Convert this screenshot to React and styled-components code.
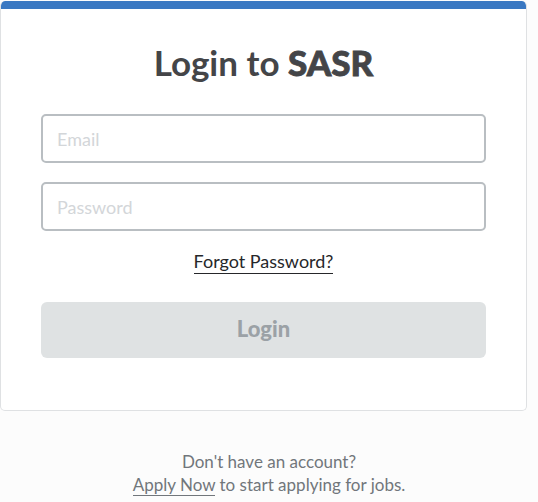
import React from 'react';
import styled, { createGlobalStyle } from 'styled-components';

const GlobalStyle = createGlobalStyle`
  html, body {
    margin: 0;
    padding: 0;
    background: #fcfcfc;
  }
  body {
    font-family: Lato, "Noto Sans", sans-serif;
  }
`;

const Page = styled.div`
  width: 538px;
  min-height: 502px;
`;

// Card with a blue strip across the top
const Card = styled.div`
  box-sizing: border-box;
  width: 527px;
  margin-top: 1px;
  background: #ffffff;
  border: 1px solid #dfe1e3;
  border-top: none;
  border-radius: 5px;
  overflow: hidden;
  padding-bottom: 52px;
`;

const TopBar = styled.div`
  height: 8px;
  background: #3a78c2;
  border-radius: 4px 4px 0 0;
`;

const Title = styled.h1`
  margin: 31px 0 0;
  text-align: center;
  font-size: 35px;
  line-height: 44px;
  font-weight: 700;
  color: #444548;

  strong {
    font-weight: 900;
    -webkit-text-stroke: 0.8px #444548;
  }
`;

const Form = styled.form`
  display: flex;
  flex-direction: column;
  gap: 19px;
  margin: 30px 40px 0 40px;
`;

const Input = styled.input`
  box-sizing: border-box;
  width: 100%;
  height: 49px;
  padding: 0 14px;
  border: 2px solid #b9bec2;
  border-radius: 5px;
  font-family: inherit;
  font-size: 18px;
  color: #333;
  outline: none;

  &::placeholder {
    color: #d3d6d9;
  }
`;

const ForgotRow = styled.div`
  display: flex;
  justify-content: center;
`;

const ForgotLink = styled.a`
  font-size: 18px;
  line-height: 22px;
  color: #26272a;
  text-decoration: none;
  border-bottom: 1.5px solid #26272a;
  padding-bottom: 1px;
  cursor: pointer;
`;

const LoginButton = styled.button`
  height: 56px;
  margin-top: 9px;
  padding: 0 0 3px;
  border: none;
  border-radius: 6px;
  background: #dfe2e3;
  color: #9ba1a6;
  font-family: inherit;
  font-size: 22px;
  font-weight: 900;
  cursor: default;
`;

const Footer = styled.div`
  margin-top: 39px;
  text-align: center;
  font-size: 17px;
  line-height: 23px;
  color: #71767b;
`;

const ApplyLink = styled.a`
  color: #71767b;
  text-decoration: none;
  border-bottom: 1.5px solid #71767b;
  cursor: pointer;
`;

export default function App() {
  return (
    <Page>
      <GlobalStyle />
      <Card>
        <TopBar />
        <Title>
          Login to <strong>SASR</strong>
        </Title>
        <Form onSubmit={(e) => e.preventDefault()}>
          <Input type="email" placeholder="Email" />
          <Input type="password" placeholder="Password" />
          <ForgotRow>
            <ForgotLink>Forgot Password?</ForgotLink>
          </ForgotRow>
          <LoginButton type="submit" disabled>
            Login
          </LoginButton>
        </Form>
      </Card>
      <Footer>
        Don't have an account?
        <br />
        <ApplyLink>Apply Now</ApplyLink> to start applying for jobs.
      </Footer>
    </Page>
  );
}
